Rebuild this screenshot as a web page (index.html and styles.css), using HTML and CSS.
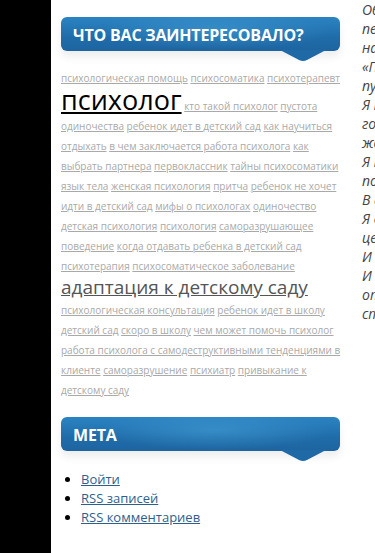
FILE: index.html
```html
<!DOCTYPE html>
<html lang="ru">
<head>
<meta charset="utf-8">
<link rel="stylesheet" href="styles.css">
</head>
<body>
<div class="page">
  <div class="leftbar"></div>
  <aside class="sidebar">
    <section class="widget">
      <h3 class="widget-title">Что вас заинтересовало?
        <svg class="tail" width="46" height="12" viewBox="0 0 46 12"><path d="M0 0 H46 L27 10 Q23 12 19 10 Z" fill="#1f69a6"/></svg>
      </h3>
      <div class="tagcloud">
        <a href="#">психологическая помощь</a> <a href="#">психосоматика</a> <a href="#">психотерапевт</a>
        <a href="#" class="t-xl">психолог</a> <a href="#">кто такой психолог</a> <a href="#">пустота одиночества</a>
        <a href="#">ребенок идет в детский сад</a> <a href="#">как научиться отдыхать</a>
        <a href="#">в чем заключается работа психолога</a> <a href="#">как выбрать партнера</a>
        <a href="#">первоклассник</a> <a href="#">тайны психосоматики</a> <a href="#">язык тела</a>
        <a href="#">женская психология</a> <a href="#">притча</a> <a href="#">ребенок не хочет идти в детский сад</a>
        <a href="#">мифы о психологах</a> <a href="#">одиночество</a> <a href="#">детская психология</a>
        <a href="#">психология</a> <a href="#">саморазрушающее поведение</a>
        <a href="#">когда отдавать ребенка в детский сад</a> <a href="#">психотерапия</a>
        <a href="#">психосоматическое заболевание</a>
        <a href="#" class="t-lg">адаптация к детскому саду</a>
        <a href="#">психологическая консультация</a> <a href="#">ребенок идет в школу</a>
        <a href="#">детский сад</a> <a href="#">скоро в школу</a> <a href="#">чем может помочь психолог</a>
        <a href="#">работа психолога с самодеструктивными тенденциями в клиенте</a>
        <a href="#">саморазрушение</a> <a href="#">психиатр</a> <a href="#">привыкание к детскому саду</a>
      </div>
    </section>
    <section class="widget meta">
      <h3 class="widget-title">Мета
        <svg class="tail" width="46" height="12" viewBox="0 0 46 12"><path d="M0 0 H46 L27 10 Q23 12 19 10 Z" fill="#1f69a6"/></svg>
      </h3>
      <ul class="meta-list">
        <li><a href="#">Войти</a></li>
        <li><a href="#">RSS записей</a></li>
        <li><a href="#">RSS комментариев</a></li>
      </ul>
    </section>
  </aside>
  <main class="content">
    <p>Обо мне</p>
    <p>пе<a href="#">рвый</a> шаг</p>
    <p>на пути</p>
    <p>«П<a href="#">сихология</a>»</p>
    <p>путь</p>
    <p>Я много</p>
    <p>город</p>
    <p>жена</p>
    <p>Я могу</p>
    <p>помочь</p>
    <p>В аспекте</p>
    <p>Я обучаю</p>
    <p>цель</p>
    <p>И <a href="#">тут</a></p>
    <p>И <a href="#">там</a></p>
    <p>отношения</p>
    <p>стресс</p>
  </main>
</div>
</body>
</html>
```
FILE: styles.css
```css
html, body {
  margin: 0;
  padding: 0;
  background: #fff;
  overflow: hidden;
}
.page {
  display: flex;
  width: 375px;
  height: 553px;
  font-family: "Open Sans", "Noto Sans", sans-serif;
}
.leftbar {
  flex: 0 0 51px;
  background: #000;
}
.sidebar {
  flex: 0 0 279px;
  padding: 17px 0 0 10px;
}
.widget {
  margin-bottom: 17px;
}
.widget-title {
  position: relative;
  margin: 0;
  height: 34px;
  padding: 0 12px;
  border-radius: 6px;
  background:
    radial-gradient(ellipse 60% 80% at 55% 40%, rgba(70,160,215,0.55), rgba(70,160,215,0) 70%),
    linear-gradient(#2b84c2, #1f6ca9 60%, #1d65a1);
  color: #fff;
  font-size: 16px;
  font-weight: 700;
  line-height: 36px;
  text-transform: uppercase;
  letter-spacing: -0.2px;
  box-shadow: 0 6px 8px rgba(0,0,0,0.07);
}
.tail {
  position: absolute;
  right: 14px;
  top: 33px;
}
.tagcloud {
  padding-top: 17px;
  margin-right: -3px;
  font-size: 10px;
  line-height: 20px;
}
.tagcloud a {
  color: #a9a9a9;
  text-decoration: underline;
}
.tagcloud a.t-xl {
  font-size: 27px;
  color: #000;
  line-height: 24px;
}
.tagcloud a.t-lg {
  font-size: 19px;
  color: #555;
  line-height: 22px;
}
.meta-list {
  margin: 19px 0 0;
  padding-left: 20px;
  font-size: 13px;
  line-height: 19px;
}
.meta-list a {
  color: #2d5f8e;
}
.content {
  flex: 1 1 auto;
  padding: 0 0 0 22px;
  overflow: hidden;
  white-space: nowrap;
  font-size: 14px;
  font-style: italic;
  color: #444;
}
.content p {
  margin: 0;
  line-height: 19px;
}
.content a {
  color: #e59a2b;
  text-decoration: none;
}
```
